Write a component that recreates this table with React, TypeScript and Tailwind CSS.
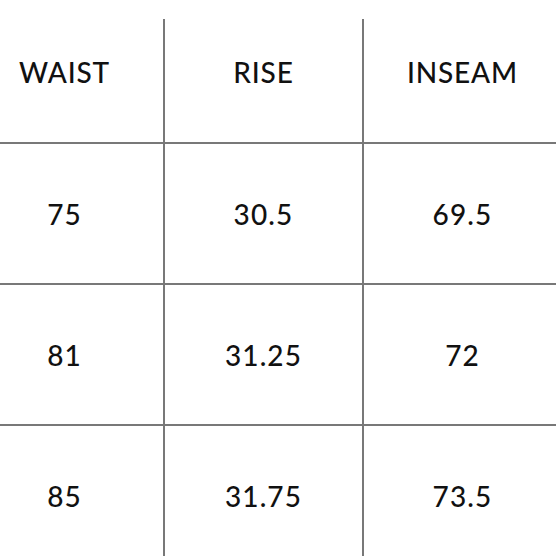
import React from 'react';

const headers = ['WAIST', 'RISE', 'INSEAM'];

const rows = [
  ['75', '30.5', '69.5'],
  ['81', '31.25', '72'],
  ['85', '31.75', '73.5'],
];

const App: React.FC = () => {
  return (
    <div
      className="w-[556px] h-[556px] overflow-hidden bg-white text-[#111111]"
      style={{ fontFamily: 'Lato, "Open Sans", sans-serif' }}
    >
      <div className="pt-[19px] ml-[-34px] w-[600px]">
        {/* header row */}
        <div className="grid grid-cols-[199px_199px_199px] h-[125px]">
          {headers.map((h) => (
            <div
              key={h}
              className="flex items-center justify-center pb-[18px] border-r-2 border-b-2 border-[#787878] text-[28px] font-medium tracking-[0.03em]"
            >
              {h}
            </div>
          ))}
        </div>

        {/* data rows */}
        {rows.map((row, i) => (
          <div key={i} className="grid grid-cols-[199px_199px_199px] h-[141px]">
            {row.map((v, j) => (
              <div
                key={j}
                className="flex items-center justify-center border-r-2 border-b-2 border-[#787878] text-[28px] font-medium tracking-[0.04em]"
              >
                {v}
              </div>
            ))}
          </div>
        ))}
      </div>
    </div>
  );
};

export default App;
